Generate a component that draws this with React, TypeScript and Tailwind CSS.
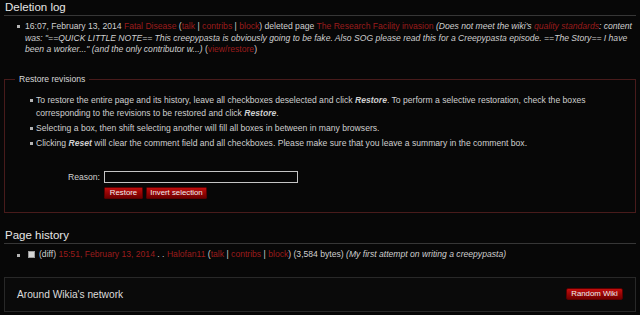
import React from "react";

const R = ({ children }: { children: React.ReactNode }) => (
  <span className="text-[#9a1c1c]">{children}</span>
);

const Bullet = ({ mt = 5, mr = 5 }: { mt?: number; mr?: number }) => (
  <span
    className="shrink-0 w-[3px] h-[3px] bg-[#b5b5b5]"
    style={{ marginTop: mt, marginRight: mr }}
  />
);

export default function App() {
  return (
    <div
      className="w-[640px] h-[315px] overflow-hidden bg-[#070707] text-[#cfcfcf]"
      style={{ fontFamily: '"Liberation Sans", Arial, sans-serif' }}
    >
      {/* Deletion log */}
      <div className="mx-[4px] pl-[1px] border-b border-[#363636] text-[11.5px] leading-[15px] text-[#e6e6e6]">
        Deletion log
      </div>
      <ul className="mt-[5px] pl-[17px] text-[8.6px] leading-[11.7px]">
        <li className="flex items-start whitespace-nowrap">
          <Bullet mt={4} mr={5} />
          <div>
            16:07, February 13, 2014 <R>Fatal Disease</R> (<R>talk</R> | <R>contribs</R> |{" "}
            <R>block</R>) deleted page <R>The Research Facility invasion</R>{" "}
            <i>
              (Does not meet the wiki's <R>quality standards</R>: content
              <br />
              was: "==QUICK LITTLE NOTE== This creepypasta is obviously going to be fake. Also SOG
              please read this for a Creepypasta episode. ==The Story== I have
              <br />
              been a worker..." (and the only contributor w...)
            </i>{" "}
            (<R>view/restore</R>)
          </div>
        </li>
      </ul>

      {/* Restore revisions */}
      <fieldset className="mx-[4px] mt-[17px] border border-[#481b1b] pb-[13px]">
        <legend className="ml-[10px] px-[4px] text-[8.6px] leading-[12px] text-[#d8d8d8]">
          Restore revisions
        </legend>
        <ul className="mt-[9px] pl-[25px] text-[8.6px] leading-[13px]">
          <li className="flex items-start whitespace-nowrap mb-[2px]">
            <Bullet mt={5} mr={3} />
            <div>
              To restore the entire page and its history, leave all checkboxes deselected and click{" "}
              <b className="italic">Restore</b>. To perform a selective restoration, check the boxes
              <br />
              corresponding to the revisions to be restored and click <b className="italic">Restore</b>.
            </div>
          </li>
          <li className="flex items-start whitespace-nowrap mb-[2px]">
            <Bullet mt={5} mr={3} />
            <div>Selecting a box, then shift selecting another will fill all boxes in between in many browsers.</div>
          </li>
          <li className="flex items-start whitespace-nowrap">
            <Bullet mt={5} mr={3} />
            <div>
              Clicking <b className="italic">Reset</b> will clear the comment field and all checkboxes. Please make
              sure that you leave a summary in the comment box.
            </div>
          </li>
        </ul>
        <div className="mt-[21px] flex items-center">
          <label className="w-[95px] text-right text-[8.6px] leading-[12px] text-[#d0d0d0]">Reason:</label>
          <div className="ml-[4px] w-[194px] h-[12px] border border-[#c4c4c4] bg-[#050505]" />
        </div>
        <div className="mt-[4px] pl-[99px] flex gap-[3px]">
          <button className="w-[39px] h-[12px] rounded-[1px] border border-[#5a0000] bg-gradient-to-b from-[#c00d0d] to-[#6e0000] text-[7.8px] leading-[10px] text-[#f0f0f0]">
            Restore
          </button>
          <button className="w-[61px] h-[12px] rounded-[1px] border border-[#5a0000] bg-gradient-to-b from-[#c00d0d] to-[#6e0000] text-[7.8px] leading-[10px] text-[#f0f0f0]">
            Invert selection
          </button>
        </div>
      </fieldset>

      {/* Page history */}
      <div className="mt-[15px] mx-[4px] pl-[1px] border-b border-[#363636] text-[11.5px] leading-[15px] text-[#e6e6e6]">
        Page history
      </div>
      <ul className="mt-[5px] pl-[17px] text-[8.6px] leading-[11.7px]">
        <li className="flex items-start whitespace-nowrap">
          <Bullet mt={5} mr={8} />
          <span className="shrink-0 mt-[2px] mr-[4px] w-[7px] h-[7px] bg-[#d4d4d4] border border-[#9a9a9a]" />
          <div>
            (diff) <R>15:51, February 13, 2014</R> . . <R>Halofan11</R> (<R>talk</R> | <R>contribs</R> |{" "}
            <R>block</R>) (3,584 bytes) <i>(My first attempt on writing a creepypasta)</i>
          </div>
        </li>
      </ul>

      {/* Around Wikia's network */}
      <div className="mt-[16px] mx-[4px] h-[35px] border border-[#282828] bg-[#0a0a0a] px-[12px] flex items-center justify-between">
        <span className="text-[10.2px] text-[#dcdcdc]">Around Wikia's network</span>
        <button className="w-[57px] h-[12px] rounded-[2px] border border-[#5a0000] bg-gradient-to-b from-[#c40f0f] to-[#700000] text-[7.8px] leading-[10px] text-[#f0f0f0]">
          Random Wiki
        </button>
      </div>
    </div>
  );
}
